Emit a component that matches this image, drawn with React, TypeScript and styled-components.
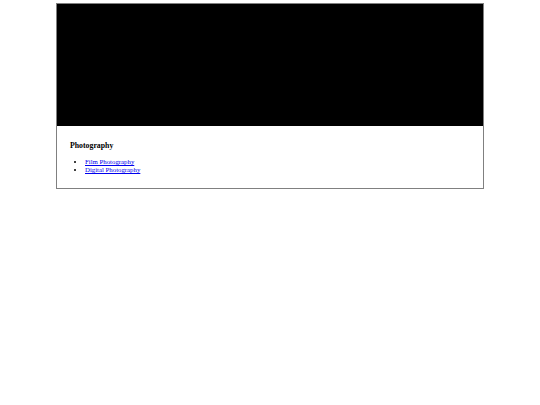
import React from 'react';
import styled, { createGlobalStyle } from 'styled-components';

const GlobalStyle = createGlobalStyle`
  html, body {
    margin: 0;
    padding: 0;
    background: #fff;
    font-family: 'Liberation Serif', 'Times New Roman', serif;
  }
`;

const links = ['Film Photography', 'Digital Photography'];

function App() {
  return (
    <>
      <GlobalStyle />
      <Page>
        <Card>
          <Cover />
          <Body>
            <Title>Photography</Title>
            <List>
              {links.map((l) => (
                <li key={l}>
                  <a href='#'>{l}</a>
                </li>
              ))}
            </List>
          </Body>
        </Card>
      </Page>
    </>
  );
}

export default App;

const Page = styled.div`
  padding-top: 3px;
  display: flex;
  justify-content: center;
`;

const Card = styled.div`
  width: 428px;
  box-sizing: border-box;
  border: 1px solid #808080;
  display: flex;
  flex-direction: column;
`;

const Cover = styled.div`
  height: 122px;
  background: #000;
`;

const Body = styled.div`
  padding: 15px 13px 14px;
`;

const Title = styled.h3`
  margin: 0 0 8px;
  font-size: 7.8px;
  font-weight: bold;
  color: #000;
`;

const List = styled.ul`
  margin: 0;
  padding-left: 15px;
  font-size: 6.8px;
  line-height: 8px;
  & a {
    color: #0000ee;
  }
`;
